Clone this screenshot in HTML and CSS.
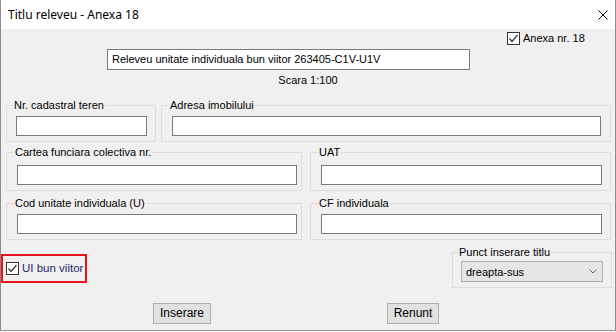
FILE: index.html
```html
<!DOCTYPE html>
<html>
<head>
<meta charset="utf-8">
<link rel="stylesheet" href="styles.css">
</head>
<body>
<div class="window">
  <div class="titlebar">
    <span class="title">Titlu releveu - Anexa 18</span>
    <svg class="close" width="10" height="10" viewBox="0 0 10 10"><path d="M0.5 0.5L9.5 9.5M9.5 0.5L0.5 9.5" stroke="#000" stroke-width="1" fill="none"/></svg>
  </div>
  <div class="body">
    <div class="anexa-row">
      <label class="check">
        <span class="box"><svg width="11" height="11" viewBox="0 0 11 11"><path d="M1.5 5.5L4 8.5L9.5 2" stroke="#333" stroke-width="1.2" fill="none"/></svg></span>
        <span>Anexa nr. 18</span>
      </label>
    </div>
    <div class="title-row">
      <div class="textbox title-box">Releveu unitate individuala bun viitor 263405-C1V-U1V</div>
    </div>
    <div class="scara">Scara 1:100</div>

    <div class="row row1">
      <fieldset class="group g-left1"><legend>Nr. cadastral teren</legend><div class="textbox"></div></fieldset>
      <fieldset class="group g-right1"><legend>Adresa imobilului</legend><div class="textbox"></div></fieldset>
    </div>
    <div class="row row2">
      <fieldset class="group g-left"><legend>Cartea funciara colectiva nr.</legend><div class="textbox"></div></fieldset>
      <fieldset class="group g-right"><legend>UAT</legend><div class="textbox"></div></fieldset>
    </div>
    <div class="row row3">
      <fieldset class="group g-left"><legend>Cod unitate individuala (U)</legend><div class="textbox"></div></fieldset>
      <fieldset class="group g-right"><legend>CF individuala</legend><div class="textbox"></div></fieldset>
    </div>

    <div class="row4">
      <label class="check highlight">
        <span class="box"><svg width="11" height="11" viewBox="0 0 11 11"><path d="M1.5 5.5L4 8.5L9.5 2" stroke="#333" stroke-width="1.2" fill="none"/></svg></span>
        <span class="ui-label">UI bun viitor</span>
      </label>
      <fieldset class="group g-punct"><legend>Punct inserare titlu</legend>
        <div class="combo"><span>dreapta-sus</span><svg width="8" height="5" viewBox="0 0 8 5"><path d="M0.5 0.5L4 4L7.5 0.5" stroke="#666" stroke-width="1" fill="none"/></svg></div>
      </fieldset>
    </div>

    <div class="buttons">
      <div class="btn btn-ins">Inserare</div>
      <div class="btn btn-ren">Renunt</div>
    </div>
  </div>
</div>
</body>
</html>
```
FILE: styles.css
```css
body {
  margin: 0;
  background: #ffffff;
  font-family: "Liberation Sans", Arial, sans-serif;
  font-size: 11px;
  color: #000;
}
.window {
  width: 616px;
  height: 331px;
  box-sizing: border-box;
  border: 1px solid #8c8c8c;
  border-top: none;
  display: flex;
  flex-direction: column;
}
.titlebar {
  flex: none;
  height: 29px;
  background: #fff;
  display: flex;
  align-items: center;
  justify-content: space-between;
  padding: 0 7px 0 7px;
}
.title {
  font-family: "Noto Sans", "Open Sans", sans-serif;
  font-size: 12px;
  color: #000;
}
.close { display: block; margin-top: 1px; }
.body {
  flex: 1;
  background: #f0f0f0;
  padding-top: 3px;
}
.anexa-row {
  display: flex;
  padding-left: 506px;
  height: 13px;
}
.check {
  display: flex;
  align-items: center;
  gap: 3px;
  line-height: 13px;
}
.box {
  width: 13px;
  height: 13px;
  box-sizing: border-box;
  border: 1px solid #333;
  background: #fff;
  display: flex;
}
.box svg { display: block; }
.title-row {
  margin-top: 4px;
  padding-left: 106px;
}
.textbox {
  box-sizing: border-box;
  height: 20px;
  border: 1px solid #7a7a7a;
  background: #fff;
  padding-left: 4px;
  line-height: 18px;
}
.title-box {
  width: 363px;
  height: 21px;
  line-height: 19px;
}
.scara {
  margin-top: 4px;
  text-align: center;
  line-height: 13px;
}
.row {
  display: grid;
  margin-left: 5px;
}
.row1 {
  margin-top: 12px;
  grid-template-columns: 150px 450px;
  column-gap: 5px;
}
.row2 {
  margin-top: 4px;
  grid-template-columns: 296px 301px;
  column-gap: 8px;
}
.row3 {
  margin-top: 6px;
  grid-template-columns: 296px 301px;
  column-gap: 8px;
}
.group {
  margin: 0;
  min-width: 0;
  border: 1px solid #dcdcdc;
  padding: 4px 8px 5px 10px;
}
.group legend {
  padding: 0 1px;
  margin-left: -3px;
  line-height: 13px;
}
.g-left1 { padding: 4px 8px 5px 9px; }
.g-right1 { padding: 4px 9px 5px 10px; }
.row2 .group { padding-top: 6px; }
.g-left { padding-right: 4px; }
.g-right { padding-right: 8px; }
.row4 {
  display: flex;
  justify-content: space-between;
  align-items: flex-start;
  margin-top: 6px;
  margin-right: 3px;
}
.highlight {
  margin-top: 8px;
  border: 2px solid #e5141f;
  padding: 2px 2px 2px 3px;
  height: 21px;
}
.ui-label {
  color: #1f1f66;
  font-size: 11.5px;
}
.g-punct {
  width: 160px;
  box-sizing: border-box;
  padding: 2px 8px 5px 8px;
}
.combo {
  height: 21px;
  box-sizing: border-box;
  border: 1px solid #adadad;
  background: #e5e5e5;
  display: flex;
  align-items: center;
  justify-content: space-between;
  padding: 0 5px 0 4px;
}
.combo svg { display: block; }
.buttons {
  margin-top: 15px;
  display: flex;
  padding-left: 152px;
  gap: 176px;
}
.btn {
  box-sizing: border-box;
  height: 21px;
  border: 1px solid #adadad;
  background: #e1e1e1;
  text-align: center;
  line-height: 19px;
  font-size: 12px;
}
.btn-ins { width: 58px; }
.btn-ren { width: 52px; }
```
